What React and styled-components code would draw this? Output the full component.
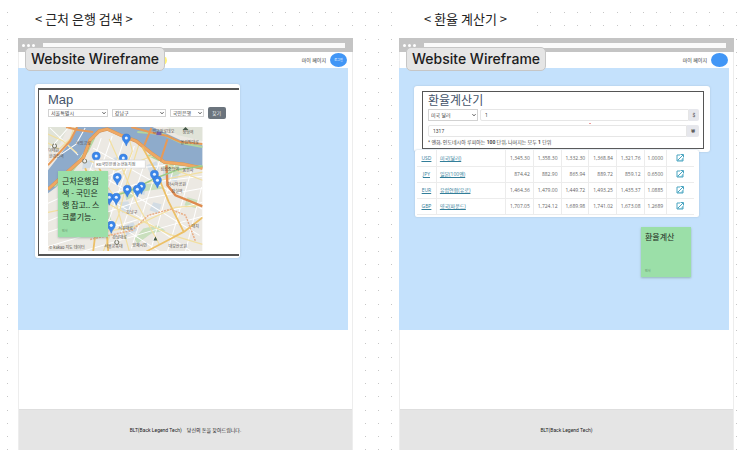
import React from "react";
import styled, { createGlobalStyle } from "styled-components";

const GlobalStyle = createGlobalStyle`
  *, *::before, *::after { box-sizing: border-box; }
  body {
    margin: 0;
    background: #fff;
    font-family: Roboto, "Noto Sans CJK KR", sans-serif;
    color: #222;
  }
  h1, h2, p { margin: 0; font-weight: 400; }
  button, input, select { font-family: inherit; margin: 0; }
`;

const offsets = [0, 13, 27, 40];
const dotTile = `url("data:image/svg+xml,${encodeURIComponent(
  `<svg xmlns="http://www.w3.org/2000/svg" width="53" height="53" fill="#c6c6c6">${offsets
    .flatMap((x) => offsets.map((y) => `<rect x="${x}" y="${y}" width="1" height="1"/>`))
    .join("")}</svg>`
)}")`;

const Board = styled.main`
  min-height: 100vh;
  display: grid;
  grid-template-columns: 1fr 1fr;
  gap: 46px;
  align-items: start;
  padding: 0 8px 9px 18px;
  background: ${dotTile} 7px 12px;
`;

const Screen = styled.section`
  display: flex;
  flex-direction: column;
  min-width: 0;
`;

const Title = styled.h1`
  align-self: flex-start;
  height: 38px;
  padding: 0 ${(p) => p.$inset}px;
  background: #fff;
  font: 400 13px/38px "Noto Sans CJK KR", sans-serif;
  white-space: pre;
`;

const Frame = styled.div`
  position: relative;
  border: solid #ededed;
  border-width: 0 1px;
  background: #fff;
`;

const BrowserBar = styled.div`
  display: flex;
  align-items: center;
  gap: 2px;
  height: 14px;
  margin: 0 -1px;
  padding: 0 8px 0 4px;
  background: #c4c4c4;
`;

const WindowDot = styled.span`
  width: 3px;
  height: 3px;
  border-radius: 50%;
  background: #fff;
`;

const Address = styled.span`
  flex: 1;
  height: 5px;
  margin-left: 6px;
  background: #fafafa;
`;

const Badge = styled.div`
  position: absolute;
  z-index: 2;
  left: 6px;
  top: 9px;
  height: 24px;
  padding: 0 5px;
  border: 1px solid #c6c6c6;
  border-radius: 5px;
  background: #e5e5e5;
  color: #1c1c1c;
  font: 500 14px/22px Inter, sans-serif;
  white-space: nowrap;
`;

const YellowDot = styled.span`
  position: absolute;
  left: 139px;
  top: 18px;
  width: 9px;
  height: 9px;
  border-radius: 50%;
  background: #fff176;
`;

const Header = styled.header`
  display: flex;
  justify-content: flex-end;
  align-items: center;
  gap: 4px;
  height: 16px;
  padding-right: 5px;
`;

const MyPage = styled.a`
  color: #333;
  font-size: 5px;
  line-height: 8px;
  text-decoration: none;
`;

const Oval = styled.button`
  width: 17px;
  height: 14px;
  padding: 0;
  border: 0;
  border-radius: 50%;
  background: #4196f6;
  color: #fff;
  font-size: 3px;
  line-height: 14px;
`;

const Stage = styled.div`
  display: flex;
  flex-direction: column;
  min-height: 262px;
  margin-right: 4px;
  margin-left: -1px;
  padding: ${(p) => p.$top}px 0 20px;
  background: #c4e1fc;
`;

const Blank = styled.div`
  height: 79px;
`;

const Footer = styled.footer`
  display: flex;
  justify-content: center;
  align-items: center;
  gap: 5px;
  height: 41px;
  background: #e5e5e5;
  border-top: 1px solid #dedede;
  color: #222;
  font: 400 5px/8px Roboto, "Noto Sans CJK KR", sans-serif;
`;

const MapCard = styled.article`
  width: 62%;
  margin-left: 17px;
  padding: 4px 1px 2px 3px;
  border-radius: 3px;
  background: #fff;
  box-shadow: 0 0 2px #a9bfd3;
`;

const MapFrame = styled.div`
  border: solid #555;
  border-width: 2px 0 2px 1px;
  padding: 2px 36px 3px 9px;
`;

const Heading = styled.h2`
  color: #44536a;
  font: 400 ${(p) => p.$size}px/16px "Liberation Sans", "Noto Sans CJK KR", sans-serif;
`;

const Filters = styled.form`
  display: grid;
  grid-template-columns: 60fr 54fr 34fr 18fr;
  column-gap: 4px;
  align-items: center;
  height: 12px;
  margin: -1px -23px 8px 0;
`;

const SelectBox = styled.span`
  display: grid;
  align-items: center;
  min-width: 0;
  > * { grid-area: 1 / 1; }
  > svg { justify-self: end; margin-right: 2px; pointer-events: none; }
`;

const Select = styled.select`
  appearance: none;
  width: 100%;
  min-width: 0;
  height: ${(p) => p.$height}px;
  padding: 0 2px;
  border: 1px solid #d2d2d2;
  border-radius: 0;
  background: #fff;
  color: #444;
  font-size: 5px;
  line-height: ${(p) => p.$height - 2}px;
`;

const FindButton = styled.button`
  height: 12px;
  padding: 0;
  border: 0;
  border-radius: 2px;
  background: #6b747d;
  color: #eee;
  font-size: 5px;
  line-height: 12px;
`;

const MapArea = styled.div`
  position: relative;
  > svg { display: block; width: 100%; height: auto; }
`;

const Note = styled.aside`
  display: flex;
  flex-direction: column;
  justify-content: space-between;
  width: 50px;
  min-height: 50px;
  padding: 4px 4px 3px;
  background: #9bdfa8;
  box-shadow: 0 1px 2px #6b8f7c88;
  color: #1d2b22;
  font: 400 8px/12px "Noto Sans CJK KR", sans-serif;
  white-space: nowrap;
`;

const MapNote = styled(Note)`
  position: absolute;
  left: 10px;
  top: 44px;
  min-height: 66px;
`;

const Author = styled.small`
  color: #5b8a66;
  font-size: 3px;
  line-height: 5px;
`;

const CalcCard = styled.article`
  margin: 0 19px 0 15px;
  padding: 5px 6px 3px 8px;
  border-radius: 3px;
  background: #fff;
  box-shadow: 0 0 2px #a9bfd3;
`;

const CalcFrame = styled.form`
  border: 1px solid #555;
  padding: 1px 4px 0 5px;
`;

const Line = styled.div`
  position: relative;
  display: flex;
  height: 12px;
  margin-bottom: 4px;
  > ${SelectBox} { width: 50px; margin-right: 2px; }
`;

const Amount = styled.input`
  flex: 1;
  min-width: 0;
  height: 12px;
  padding: 0 4px;
  border: 1px solid #e6e6e6;
  border-radius: 2px 0 0 2px;
  background: #fff;
  color: #444;
  font-size: 5px;
`;

const Unit = styled.span`
  width: ${(p) => p.$width}px;
  border-radius: 0 2px 2px 0;
  background: #e6e7ec;
  color: #444;
  font-size: 5px;
  line-height: 12px;
  text-align: center;
`;

const RedMark = styled.span`
  position: absolute;
  left: 161px;
  top: 14px;
  width: 2px;
  height: 1px;
  background: #ee9a9a;
`;

const Hint = styled.p`
  margin-top: -2px;
  padding-bottom: 3px;
  color: #444;
  font-size: 5px;
  line-height: 6px;
  white-space: nowrap;
`;

const RateCard = styled.div`
  position: relative;
  margin: -2px 30px 0 16px;
  padding: 0 5px 2px 2px;
  border-radius: 2px;
  background: #fff;
  box-shadow: 0 0 2px #a9bfd3;
`;

const RateTable = styled.table`
  width: 100%;
  border-collapse: collapse;
  table-layout: fixed;
  font: 400 5px/6px "Open Sans", "Noto Sans CJK KR", sans-serif;
`;

const Col = styled.col`
  width: ${(p) => p.$share}%;
`;

const Cell = styled.td`
  height: 16px;
  padding: 0 3px;
  border: solid #ececec;
  border-width: 0 1px 1px 0;
  color: #666;
  text-align: ${(p) => p.$align || "right"};
  vertical-align: middle;
  white-space: nowrap;
  &:last-child { border-right: 0; }
  svg { display: block; margin: 0 auto; }
`;

const RateLink = styled.a`
  color: #337e99;
  text-decoration: underline;
`;

const CalcNote = styled(Note)`
  align-self: flex-end;
  margin: 10px 38px 0 0;
`;

function Arrow() {
  return (
    <svg width="4" height="4" viewBox="0 0 8 8" fill="none" stroke="#444" strokeWidth="2" aria-hidden="true">
      <path d="M1 2.5 4 5.5 7 2.5" />
    </svg>
  );
}

function Dropdown({ label, value, height = 8 }) {
  return (
    <SelectBox>
      <Select aria-label={label} $height={height} defaultValue={value}>
        <option>{value}</option>
      </Select>
      <Arrow />
    </SelectBox>
  );
}

function OpenIcon() {
  return (
    <svg width="8" height="8" viewBox="0 0 16 16" fill="none" stroke="#4aa5c1" strokeWidth="2" aria-hidden="true">
      <path d="M2 14h12V8L8 13 2 11Z" fill="#a9d6e3" stroke="none" />
      <path d="M8 2H2v12h12V8M4 12l10-10M9 1h6v6" />
    </svg>
  );
}

const pins = [
  [78, 11], [48, 29], [75, 31], [69, 50], [106, 47], [109, 53],
  [93, 59], [79, 62], [89, 62], [61, 70], [68, 70], [63, 98],
];

const places = [
  [0, 25, "이태원"], [1, 31, "한강진역"], [28, 18, "서빙고로"], [104, 6, "압구정로데오"],
  [134, 7, "청담역"], [78, 87, "강남구"], [132, 17, "올림픽대로"],
  [112, 44, "삼성중앙역"], [134, 45, "봉은사"], [119, 59, "아시아공원"], [123, 66, "잠실역"],
  [70, 103, "서초대로"], [64, 112, "강남대로"], [56, 121, "서울교육대"],
  [84, 120, "양재시민"], [120, 121, "대모산공원"], [143, 101, "대치"],
];

function CityMap() {
  return (
    <svg viewBox="0 0 154 124" role="img" aria-label="은행 지도">
      <defs>
        <clipPath id="city-clip"><path d="M0 0H154V124H0Z" /></clipPath>
      </defs>
      <g clipPath="url(#city-clip)" fill="none">
        <path d="M0 0H154V124H0Z" fill="#ece9e3" />
        <path d="M0 0 20 0 12 17 0 22Z M118 0H154V14L129 8Z" fill="#e0e3d8" />
        <path d="M28 0H104L119 7 136 15 154 18V39L122 36 105 30 91 16 72 7 57 3 45 9 38 22 25 40 8 60 0 66V43L11 29 22 15Z" fill="#8eabcb" />
        <path d="M6 59 24 43 39 24 46 10" stroke="#b6d8a3" strokeWidth="3" />
        <path d="M89 5 114 7 133 16 154 20M100 28 119 37 154 39" stroke="#b1d69e" strokeWidth="2" />
        <path d="m65 31 8-2 3 8-8 3ZM89 57l9 1-2 10-9-3ZM98 38l10-4 3 9-9 4ZM115 42l16 3-3 10-14-4ZM71 75l9-1 3 8-9 4ZM105 75l8 2-3 9-9-3ZM75 99l10-4 4 8-11 5ZM35 34l9-1 1 7-11 2Z" fill="#d2dce4" />
        <path d="m76 64 16-7 17-1 8 5-21 3-18 9ZM114 39l15-1 6 7-10 4ZM139 70l10 3-1 8-12-3ZM86 111l9-10 14-3 8 5-14 3-14 10ZM53 82l9 3 1 8-12-1Z" fill="#c9dfbd" />
        <g stroke="#fff" strokeWidth="1">
          <path d="M45 21 154 82M53 11 38 54M64 9 45 63M76 12 51 88M86 19 59 98M98 31 70 114M111 34 83 121M126 38 102 124M143 43 119 124M153 60 137 124M42 42 91 71 151 108M43 61 98 94 143 124M35 77 80 104 111 124M0 76 75 42 118 38M0 94 87 57 154 49M0 105 99 71 154 61M0 119 104 88 154 75M34 124 118 99 154 89M2 1 30 28M20 1 0 24M37 1 28 17 0 36" />
        </g>
        <g stroke="#f2dfa0" strokeWidth="1.2">
          <path d="M0 16 11 22 22 12 26 0M0 7 15 14 29 26M42 34 68 43 106 28 130 44 154 53M47 43 66 69 81 124M61 12 73 39 89 77 111 117M91 16 79 54 70 89 55 124M34 61 68 81 121 107 154 117M0 85 49 75 96 56 154 45M44 106 84 100 127 80 154 78M80 8 84 24 75 47" />
        </g>
        <path d="M0 62 20 44 35 31 42 13 51 4 59 2 72 8 88 14 103 26 116 35 135 37 154 41" stroke="#cf925a" strokeWidth="3.4" />
        <path d="M0 62 20 44 35 31 42 13 51 4 59 2 72 8 88 14 103 26 116 35 135 37 154 41" stroke="#efa863" strokeWidth="2.6" />
        <path d="m83 0 18 5 18 4 13 6 22 2M119 12l-7 22M103 1 96 18M45 5 30 3 18 0M29 0l-7 14L0 38" stroke="#e69a58" strokeWidth="2" />
        <path d="M118 38l1 20 8 10 27 11" stroke="#de8a4e" strokeWidth="2.4" />
        <path d="m94 20 14 25 12 29 15 30M154 90l-18 14-17 9-21 11M47 32 56 52 50 84 45 124M37 41 49 70 58 100 60 124" stroke="#ecc067" strokeWidth="1.8" />
        <path d="m42 112 42-9 16-15 22-6 15 6 10 26" stroke="#e9ae86" strokeWidth="1.5" strokeDasharray="2 1" />
        <path d="m38 77 43-13 26-13 24-9 23-3" stroke="#9acc87" strokeWidth="1.5" />
        <path d="M6 17a2 2 0 1 0 1 0M36 32a2 2 0 1 0 1 0M68 113a2 2 0 1 0 1 0" fill="#eee" stroke="#776" strokeWidth="1" />
        <path d="m137 0 3 3h-6ZM107 109l2 4h-4Z" fill="#455949" />
        <path d="M108 5h5v3h-5Z" fill="#7460ad" />
        <g fill="#554f4b" fontSize="4" fontFamily="Noto Sans CJK KR, sans-serif">
          {places.map(([x, y, name]) => (
            <text key={name} x={x} y={y}>{name}</text>
          ))}
          <text x="1" y="122">© kakao 지도 데이터</text>
        </g>
        {pins.map(([x, y]) => (
          <g key={`${x}-${y}`} transform={`translate(${x} ${y})`}>
            <path d="M0 8C-1 4-4 3-4 0a4 4 0 0 1 8 0C4 3 1 4 0 8Z" fill="#3b86ea" stroke="#2c72d2" strokeWidth=".5" />
            <circle r="1.5" fill="#e8f2ff" />
          </g>
        ))}
        <path d="M46 33H97V41H46Z" fill="#fff" stroke="#ccc" strokeWidth=".6" />
        <text x="48" y="39" fill="#555" fontSize="4" fontFamily="Noto Sans CJK KR, sans-serif">KB국민은행 논현동지점</text>
      </g>
    </svg>
  );
}

const rates = [
  ["USD", "미국(달러)", "1,345.30", "1,358.30", "1,332.30", "1,368.84", "1,321.76", "1.0000"],
  ["JPY", "일본(100엔)", "874.42", "882.90", "865.94", "889.72", "859.12", "0.6500"],
  ["EUR", "유럽연합(유로)", "1,464.36", "1,479.00", "1,449.72", "1,493.25", "1,435.37", "1.0885"],
  ["GBP", "영국(파운드)", "1,707.05", "1,724.12", "1,689.98", "1,741.02", "1,673.08", "1.2689"],
];
const shares = [7, 25, 10, 10, 10, 10, 10, 8, 10];

function Wireframe({ title, inset, top, action, marker, footer, children }) {
  return (
    <Screen>
      <Title $inset={inset}>{title}</Title>
      <Frame>
        <BrowserBar>
          <WindowDot /><WindowDot /><WindowDot />
          <Address />
        </BrowserBar>
        {marker && <YellowDot />}
        <Badge>Website Wireframe</Badge>
        <Header>
          <MyPage href="#mypage">마이 페이지</MyPage>
          <Oval type="button" aria-label={action || "프로필"}>{action}</Oval>
        </Header>
        <Stage $top={top}>{children}</Stage>
        <Blank />
        <Footer>
          <span>BLT(Back Legend Tech)</span>
          {footer && <span>{footer}</span>}
        </Footer>
      </Frame>
    </Screen>
  );
}

export default function App() {
  return (
    <>
      <GlobalStyle />
      <Board>
        <Wireframe title="< 근처 은행 검색 >" inset={17} top={16} action="로그인" marker footer="당신의 돈을 찾아드립니다.">
          <MapCard>
            <MapFrame>
              <Heading $size={13}>Map</Heading>
              <Filters>
                <Dropdown label="시/도" value="서울특별시" />
                <Dropdown label="구" value="강남구" />
                <Dropdown label="은행" value="국민은행" />
                <FindButton type="button">찾기</FindButton>
              </Filters>
              <MapArea>
                <CityMap />
                <MapNote>
                  <p>근처은행검<br />색 - 국민은<br />행 참고.. 스<br />크롤기능..</p>
                  <Author>민서</Author>
                </MapNote>
              </MapArea>
            </MapFrame>
          </MapCard>
        </Wireframe>
        <Wireframe title="< 환율 계산기 >" inset={25} top={18}>
          <CalcCard>
            <CalcFrame>
              <Heading $size={12}>환율계산기</Heading>
              <Line>
                <Dropdown label="통화" value="미국 달러" height={12} />
                <Amount aria-label="외화 금액" defaultValue="1" />
                <Unit $width={10}>$</Unit>
                <RedMark />
              </Line>
              <Line>
                <Amount aria-label="원화 금액" defaultValue="1317" />
                <Unit $width={12}>₩</Unit>
              </Line>
              <Hint>* 엔화, 인도네시아 루피아는 <b>100</b> 단위, 나머지는 모두 <b>1</b> 단위</Hint>
            </CalcFrame>
          </CalcCard>
          <RateCard>
            <RateTable>
              <colgroup>{shares.map((s, i) => <Col key={i} $share={s} />)}</colgroup>
              <tbody>
                {rates.map(([code, name, ...values]) => (
                  <tr key={code}>
                    <Cell $align="center"><RateLink href={`#${code}`}>{code}</RateLink></Cell>
                    <Cell $align="left"><RateLink href={`#${code}`}>{name}</RateLink></Cell>
                    {values.map((v) => <Cell key={v}>{v}</Cell>)}
                    <Cell $align="center"><a href={`#${code}-open`} aria-label={`${name} 열기`}><OpenIcon /></a></Cell>
                  </tr>
                ))}
              </tbody>
            </RateTable>
          </RateCard>
          <CalcNote>
            <p>환율계산</p>
            <Author>민서</Author>
          </CalcNote>
        </Wireframe>
      </Board>
    </>
  );
}
